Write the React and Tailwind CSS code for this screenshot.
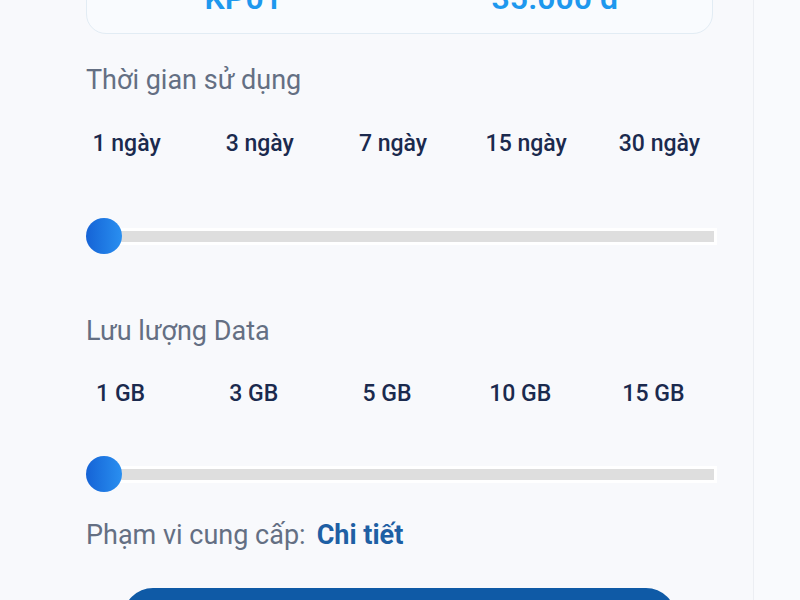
import React, { useState } from "react";

const days = ["1 ngày", "3 ngày", "7 ngày", "15 ngày", "30 ngày"];
const datas = ["1 GB", "3 GB", "5 GB", "10 GB", "15 GB"];

const Slider = ({ value, count }) => {
  const pct = (value / (count - 1)) * 100;
  return (
    <div className="flex items-center h-[36px]">
      <div className="relative flex-1 flex items-center h-[36px]">
        <div className="ml-[23px] mr-[-1px] flex-1 h-[11px] bg-[#dedede] shadow-[0_0_0_3px_#ffffff]" />
        <div
          className="absolute top-0 h-[36px] w-[36px] rounded-full bg-linear-to-r from-[#1663d6] to-[#2a8ff0]"
          style={{ left: `calc(${pct}% - ${pct * 0.36}px)` }}
        />
      </div>
    </div>
  );
};

const Options = ({ items, shift }) => (
  <div className={`grid grid-cols-5 w-[666px] ${shift} h-[30px] items-center`}>
    {items.map((t) => (
      <div
        key={t}
        className="text-center text-[23px] leading-[30px] font-medium text-[#1b2a4e]"
      >
        {t}
      </div>
    ))}
  </div>
);

export default function App() {
  const [day] = useState(0);
  const [data] = useState(0);

  return (
    <div
      className="h-[600px] overflow-hidden bg-[#f9fafd]"
      style={{ fontFamily: "Roboto, 'Noto Sans', sans-serif" }}
    >
      <div className="flow-root w-[754px] h-full border-r border-[#eceef3] bg-[#f8f9fc] pl-[86px] pr-[40px]">
        {/* package summary card */}
        <div className="mt-[-60px] h-[94px] rounded-[20px] border border-[#e2ecf4] bg-[#f9fbfe] pt-[37px] grid grid-cols-2">
          <div className="text-center text-[32px] leading-[40px] font-semibold text-[#1e98ee]">
            KP01
          </div>
          <div className="text-center text-[32px] leading-[40px] font-semibold text-[#1e98ee]">
            35.000 đ
          </div>
        </div>

        <div className="mt-[30px] text-[27px] leading-[32px] text-[#646f83]">
          Thời gian sử dụng
        </div>
        <div className="mt-[33px]">
          <Options items={days} shift="ml-[-26px]" />
        </div>
        <div className="mt-[59px]">
          <Slider value={day} count={days.length} />
        </div>

        <div className="mt-[61px] text-[27px] leading-[32px] text-[#646f83]">
          Lưu lượng Data
        </div>
        <div className="mt-[32px]">
          <Options items={datas} shift="ml-[-32px]" />
        </div>
        <div className="mt-[47px]">
          <Slider value={data} count={datas.length} />
        </div>

        <div className="mt-[27px] text-[27px] leading-[32px] text-[#646f83] flex items-baseline gap-[11px]">
          <span>Phạm vi cung cấp:</span>
          <span className="font-bold text-[#1e5fa4]">Chi tiết</span>
        </div>

        <div className="mt-[37px] ml-[37px] w-[553px] h-[60px] rounded-[30px] bg-[#0f5aa6]" />
      </div>
    </div>
  );
}
